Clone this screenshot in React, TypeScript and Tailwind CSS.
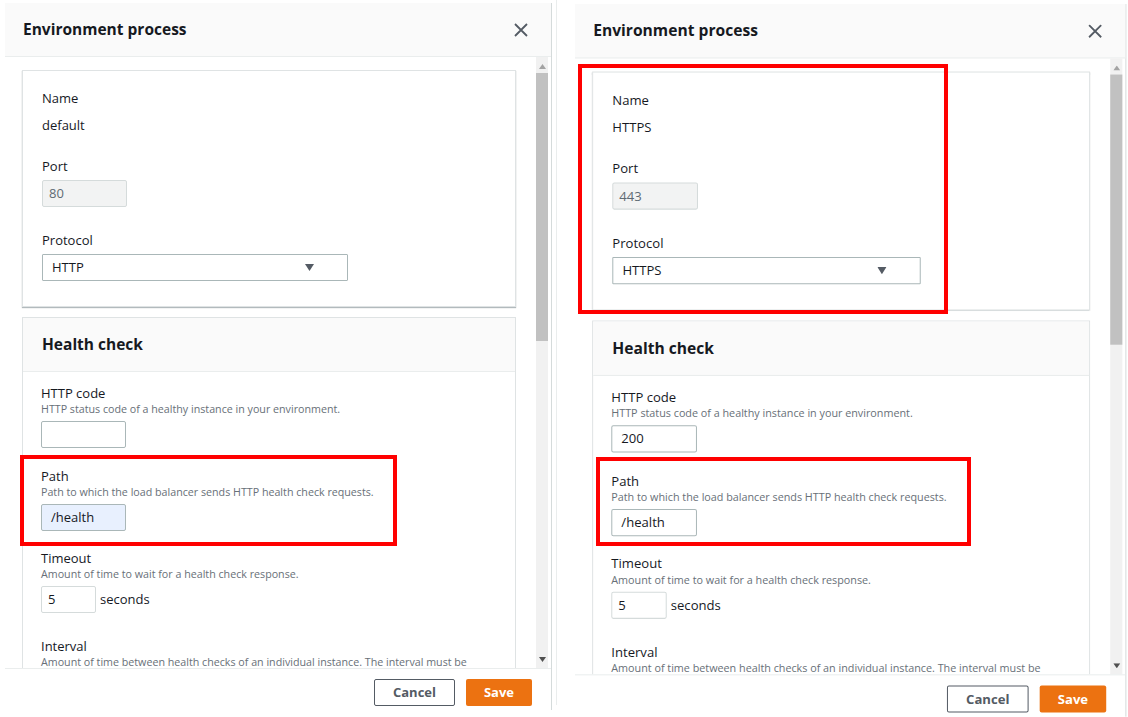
const font = "font-['Open_Sans','Noto_Sans',sans-serif]";

type PanelProps = {
  name: string;
  port: string;
  protocol: string;
  httpCode: string;
  autofill: boolean;
};

function Label({ text, desc }: { text: string; desc?: string }) {
  return (
    <div>
      <div className="text-[13px] leading-[18px] text-[#16191f]">{text}</div>
      {desc && <div className="text-[10.7px] leading-[14px] text-[#687078] whitespace-nowrap">{desc}</div>}
    </div>
  );
}

function Panel({ name, port, protocol, httpCode, autofill }: PanelProps) {
  return (
    <div className="flex flex-col w-[547px] h-[707px] bg-white border-r border-[#d5dbdb]">
      <div className="h-[54px] shrink-0 bg-[#fafafa] border-b border-[#eaeded] flex items-center justify-between pl-[18px] pr-[23px]">
        <h2 className="text-[15.5px] font-bold text-[#16191f]">Environment process</h2>
        <svg width="14" height="14" viewBox="0 0 14 14" className="text-[#545b64]">
          <path d="M1 1L13 13M13 1L1 13" stroke="currentColor" strokeWidth="1.8" />
        </svg>
      </div>

      <div className="flex-1 flex min-h-0">
        <div className="flex-1 overflow-hidden pl-[17px] pr-[20px] pt-[13px]">
          {/* process settings */}
          <div className="bg-white border border-[#dfe3e4] shadow-[0_1px_1px_rgba(0,28,36,0.3)] pl-[19px] pt-[17px] pb-[25px]">
            <div className="text-[13px] leading-[20px] text-[#16191f]">Name</div>
            <div className="mt-[7px] text-[13px] leading-[20px] text-[#16191f]">{name}</div>
            <div className="mt-[21px] text-[13px] leading-[20px] text-[#16191f]">Port</div>
            <div className="mt-[4px] w-[85px] h-[27px] rounded-[2px] border border-[#d5dbdb] bg-[#f2f3f3] flex items-center px-[6px] text-[13px] text-[#5f6b73]">
              {port}
            </div>
            <div className="mt-[23px] text-[13px] leading-[20px] text-[#16191f]">Protocol</div>
            <div className="mt-[4px] w-[306px] h-[27px] border border-[#aab7b8] rounded-[1px] flex items-center justify-between pl-[9px] pr-[33px] text-[13px] text-[#16191f]">
              <span>{protocol}</span>
              <svg width="9" height="7" viewBox="0 0 9 7">
                <path d="M0 0H9L4.5 7Z" fill="#545b64" />
              </svg>
            </div>
          </div>

          {/* health check */}
          <div className="mt-[10px] bg-white border border-[#dfe3e4]">
            <div className="h-[54px] bg-[#fafafa] border-b border-[#eaeded] flex items-center pl-[19px]">
              <h3 className="text-[15.5px] font-bold text-[#16191f]">Health check</h3>
            </div>
            <div className="pl-[18px] pt-[12px]">
              <Label text="HTTP code" desc="HTTP status code of a healthy instance in your environment." />
              <div className="mt-[5px] w-[85px] h-[27px] rounded-[2px] border border-[#aab7b8] flex items-center px-[9px] text-[13px] text-[#16191f]">
                {httpCode}
              </div>
              <div className="mt-[19px]">
                <Label text="Path" desc="Path to which the load balancer sends HTTP health check requests." />
              </div>
              <div
                className={`mt-[5px] w-[85px] h-[27px] rounded-[2px] border border-[#aab7b8] flex items-center px-[9px] text-[13px] text-[#16191f] ${
                  autofill ? "bg-[#e8f0fe]" : "bg-white"
                }`}
              >
                /health
              </div>
              <div className="mt-[18px]">
                <Label text="Timeout" desc="Amount of time to wait for a health check response." />
              </div>
              <div className="mt-[5px] flex items-center gap-[4px]">
                <div className="w-[55px] h-[27px] rounded-[2px] border border-[#d5dbdb] flex items-center px-[6px] text-[13px] text-[#16191f]">
                  5
                </div>
                <span className="text-[13px] text-[#16191f]">seconds</span>
              </div>
              <div className="mt-[24px]">
                <Label
                  text="Interval"
                  desc="Amount of time between health checks of an individual instance. The interval must be"
                />
              </div>
            </div>
          </div>
        </div>

        {/* scrollbar */}
        <div className="w-[12px] mr-[3px] bg-[#f1f1f1] flex flex-col items-center">
          <svg width="7" height="5" viewBox="0 0 7 5" className="mt-[7px]">
            <path d="M0 5H7L3.5 0Z" fill="#a3a3a3" />
          </svg>
          <div className="mt-[4px] w-full h-[268px] bg-[#c1c1c1]" />
          <div className="flex-1" />
          <svg width="7" height="5" viewBox="0 0 7 5" className="mb-[6px]">
            <path d="M0 0H7L3.5 5Z" fill="#505050" />
          </svg>
        </div>
      </div>

      <div className="h-[42px] shrink-0 border-t border-[#eaeded] flex items-start justify-end gap-[11px] pt-[10px] pr-[19px]">
        <button className="w-[81px] h-[27px] border border-[#545b64] rounded-[2px] text-[13px] font-bold text-[#545b64] bg-white">
          Cancel
        </button>
        <button className="w-[66px] h-[27px] rounded-[2px] text-[13px] font-bold text-white bg-[#ec7211]">
          Save
        </button>
      </div>
    </div>
  );
}

export default function App() {
  return (
    <div className={`relative w-[1128px] h-[717px] overflow-hidden bg-white ${font}`}>
      <div className="flex">
        <div className="ml-[5px] mt-[3px]">
          <Panel name="default" port="80" protocol="HTTP" httpCode="" autofill={true} />
        </div>
        <div className="ml-[4px] w-px h-[705px] bg-[#eaeded]" />
        <div className="ml-[18px] mt-[4px] origin-top-left scale-[1.008]">
          <Panel name="HTTPS" port="443" protocol="HTTPS" httpCode="200" autofill={false} />
        </div>
      </div>

      {/* annotation boxes */}
      <div className="absolute left-[20px] top-[455px] w-[377px] h-[91px] border-[4px] border-[#ff0000]" />
      <div className="absolute left-[578px] top-[64px] w-[370px] h-[250px] border-[4px] border-[#ff0000]" />
      <div className="absolute left-[596px] top-[457px] w-[375px] h-[89px] border-[4px] border-[#ff0000]" />
    </div>
  );
}
